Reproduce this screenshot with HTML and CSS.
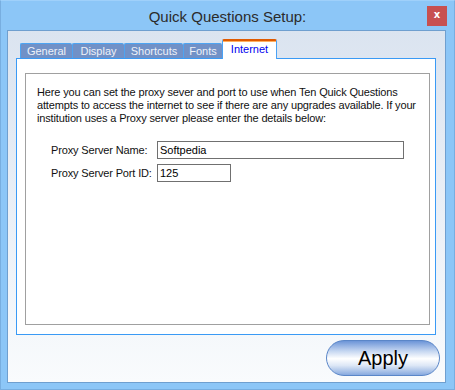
FILE: index.html
```html
<!DOCTYPE html>
<html lang="en">

<head>
    <meta charset="UTF-8">
    <title>Quick Questions Setup:</title>
    <link rel="stylesheet" href="styles.css">
</head>

<body>
    <div class="window">
        <div class="titlebar">
            <span></span>
            <span class="title">Quick Questions Setup:</span>
            <button class="close">x</button>
        </div>

        <div class="client">
            <div class="tabs">
                <div class="tab">General</div>
                <div class="tab">Display</div>
                <div class="tab">Shortcuts</div>
                <div class="tab">Fonts</div>
                <div class="tab active">Internet</div>
            </div>
            <div class="panel">
                <div class="group">
                    <p class="intro">Here you can set the proxy sever and port to use when Ten Quick Questions
                        attempts to access the internet to see if there are any upgrades available. If your
                        institution uses a Proxy server please enter the details below:</p>
                    <div class="field">
                        <label for="proxyName">Proxy Server Name:</label>
                        <input id="proxyName" class="name-input" type="text" value="Softpedia">
                    </div>
                    <div class="field">
                        <label for="proxyPort">Proxy Server Port ID:</label>
                        <input id="proxyPort" class="port-input" type="text" value="125">
                    </div>
                </div>
            </div>
            <div class="footer">
                <button class="apply">Apply</button>
            </div>
        </div>
    </div>
</body>

</html>
```

FILE: styles.css
```css
* {
    box-sizing: border-box;
}

body {
    margin: 0;
    font-family: "Liberation Sans", Arial, sans-serif;
}

.window {
    width: 455px;
    height: 390px;
    background-color: #8cc6f7;
    border: 1px solid #78aee0;
    border-top-color: #9fd0fa;
    padding: 0 8px 0 6px;
}

.titlebar {
    height: 29px;
    display: grid;
    grid-template-columns: 1fr auto 1fr;
    align-items: center;
}

.title {
    font-size: 15px;
    color: #2b2b2b;
    padding-left: 2px;
    padding-top: 1px;
}

.close {
    justify-self: end;
    width: 20px;
    height: 20px;
    margin-right: -1px;
    margin-top: 1px;
    border: none;
    background-color: #c75050;
    color: white;
    font-family: "DejaVu Sans", sans-serif;
    font-weight: bold;
    font-size: 10px;
    padding: 0 0 3px 0;
}

.client {
    height: 353px;
    border: 1px solid #6f9fcf;
    background: linear-gradient(#dbe4f0, #f9fbfd);
    padding: 7px 9px 0 8px;
}

.tabs {
    display: flex;
    align-items: flex-end;
    height: 20px;
    padding-left: 4px;
    position: relative;
    z-index: 1;
}

.tab {
    height: 15px;
    padding: 0 2px;
    background-color: #7191c7;
    border-top: 1px solid #4da4f2;
    border-left: 1px solid #4da4f2;
    border-radius: 2px 2px 0 0;
    color: #eef2f9;
    font-size: 11px;
    line-height: 14px;
    text-align: center;
}

.tab:nth-child(1) { width: 52px; }
.tab:nth-child(2) { width: 52px; }
.tab:nth-child(3) { width: 59px; }
.tab:nth-child(4) { width: 39px; }

.tab.active {
    width: 55px;
    height: 20px;
    background-color: white;
    color: #0000f0;
    border: 1px solid #4aa2f5;
    border-top: 2px solid #e05a00;
    border-bottom: none;
    box-shadow: inset 0 1px 0 #ffb060;
    line-height: 17px;
    margin-bottom: -1px;
}

.panel {
    height: 277px;
    background-color: white;
    border: 1px solid #3a9af5;
    padding: 14px 5px 9px 8px;
}

.group {
    height: 100%;
    border: 1px solid #a0a0a0;
    padding: 12px 8px 0 11px;
    font-size: 11px;
    letter-spacing: -0.15px;
    color: #111;
}

.intro {
    margin: 0 0 16px 0;
    line-height: 13px;
}

.field {
    display: flex;
    align-items: center;
    padding-left: 14px;
    margin-bottom: 5px;
}

.field label {
    width: 106px;
}

.field input {
    height: 18px;
    border: 1px solid #707070;
    padding: 0 2px;
    font-family: "Liberation Sans", Arial, sans-serif;
    font-size: 11px;
    color: #000;
}

.name-input {
    width: 247px;
}

.port-input {
    width: 74px;
}

.footer {
    display: flex;
    justify-content: flex-end;
    padding-top: 5px;
}

.apply {
    width: 114px;
    height: 36px;
    margin-right: -4px;
    border: 1px solid #5a86c8;
    border-radius: 18px;
    background: linear-gradient(#6c95d8 0%, #c6d7f1 30%, #ffffff 52%, #dde7f6 72%, #87a9df 100%);
    font-family: "Liberation Sans", Arial, sans-serif;
    font-size: 20px;
    color: #000;
    padding-top: 2px;
}
```
